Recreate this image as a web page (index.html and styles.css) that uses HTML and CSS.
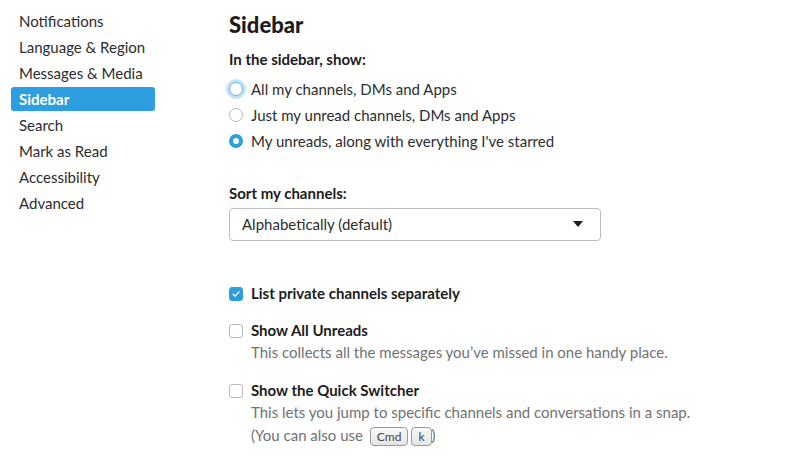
FILE: index.html
```html
<!DOCTYPE html>
<html lang="en">
<head>
  <meta charset="UTF-8" />
  <title>Preferences - Sidebar</title>
  <link rel="stylesheet" href="styles.css">
</head>
<body>
  <div class="nav">
    <a href="#">Notifications</a>
    <a href="#">Language &amp; Region</a>
    <a href="#">Messages &amp; Media</a>
    <a href="#" class="active">Sidebar</a>
    <a href="#">Search</a>
    <a href="#">Mark as Read</a>
    <a href="#">Accessibility</a>
    <a href="#">Advanced</a>
  </div>

  <div class="main">
    <h1>Sidebar</h1>

    <div class="label">In the sidebar, show:</div>
    <div class="radios">
      <label class="option"><span class="radio focus"></span>All my channels, DMs and Apps</label>
      <label class="option"><span class="radio"></span>Just my unread channels, DMs and Apps</label>
      <label class="option"><span class="radio checked"></span>My unreads, along with everything I've starred</label>
    </div>

    <div class="label sort">Sort my channels:</div>
    <div class="select">
      <span>Alphabetically (default)</span>
      <span class="caret"></span>
    </div>

    <div class="check first">
      <span class="box checked">
        <svg viewBox="0 0 12 12" width="10" height="10"><path d="M2.5 6.3 L5 8.6 L9.6 3.4" fill="none" stroke="#fff" stroke-width="1.6" stroke-linecap="round" stroke-linejoin="round"/></svg>
      </span>
      <div>
        <div class="title">List private channels separately</div>
      </div>
    </div>

    <div class="check">
      <span class="box"></span>
      <div>
        <div class="title">Show All Unreads</div>
        <div class="desc">This collects all the messages you’ve missed in one handy place.</div>
      </div>
    </div>

    <div class="check">
      <span class="box"></span>
      <div>
        <div class="title">Show the Quick Switcher</div>
        <div class="desc">This lets you jump to specific channels and conversations in a snap.<br>(You can also use <kbd>Cmd</kbd><kbd>k</kbd>)</div>
      </div>
    </div>
  </div>
</body>
</html>
```

FILE: styles.css
```css
* {
  box-sizing: border-box;
  margin: 0;
  padding: 0;
}

body {
  font-family: Lato, "Open Sans", sans-serif;
  font-size: 15px;
  color: #2c2d30;
  background: #fff;
  display: flex;
  min-height: 100vh;
}

/* Left nav */
.nav {
  width: 229px;
  padding: 9px 0 0 11px;
}

.nav a {
  display: block;
  width: 144px;
  height: 24px;
  line-height: 24px;
  margin-bottom: 2px;
  padding-left: 8px;
  color: #2c2d30;
  text-decoration: none;
  border-radius: 3px;
}

.nav a.active {
  background: #2d9ee0;
  color: #fff;
  font-weight: 700;
}

/* Main */
.main {
  flex: 1;
}

.main h1 {
  margin-top: 10px;
  font-size: 22px;
  line-height: 30px;
  font-weight: 900;
  color: #1d1c1d;
}

.label {
  margin-top: 8px;
  line-height: 22px;
  font-weight: 700;
  color: #1d1c1d;
}

.label.sort {
  margin-top: 28px;
}

.radios {
  margin-top: 6px;
}

.option {
  display: flex;
  align-items: center;
  height: 26px;
}

.radio {
  width: 14px;
  height: 14px;
  margin-right: 8px;
  border: 1px solid #b8b8b8;
  border-radius: 50%;
  background: #fff;
}

.radio.focus {
  border-color: #6fb1e8;
  box-shadow: 0 0 1px 3px rgba(45, 158, 224, 0.3);
}

.radio.checked {
  border: 4px solid #2d9ee0;
}

.select {
  display: flex;
  align-items: center;
  justify-content: space-between;
  width: 372px;
  height: 33px;
  margin-top: 4px;
  padding: 0 17px 1px 12px;
  border: 1px solid #bdbdbd;
  border-radius: 4px;
  color: #2c2d30;
}

.caret {
  width: 0;
  height: 0;
  border-left: 5px solid transparent;
  border-right: 5px solid transparent;
  border-top: 6px solid #1d1c1d;
}

/* Checkboxes */
.check {
  display: flex;
  margin-top: 15px;
}

.check.first {
  margin-top: 41px;
}

.box {
  flex: none;
  display: flex;
  align-items: center;
  justify-content: center;
  width: 14px;
  height: 14px;
  margin: 5px 8px 0 0;
  border: 1px solid #b8b8b8;
  border-radius: 3px;
  background: #fff;
}

.box.checked {
  background: #2d9ee0;
  border-color: #2d9ee0;
}

.title {
  line-height: 22px;
  font-weight: 700;
  color: #1d1c1d;
}

.desc {
  line-height: 23px;
  color: #717274;
}

kbd {
  display: inline-block;
  height: 19px;
  line-height: 17px;
  padding: 0 6px;
  margin-left: 3px;
  font-family: Lato, sans-serif;
  font-size: 12px;
  color: #444;
  background: linear-gradient(#fafafa, #e4e4e4);
  border: 1px solid #9a9a9a;
  border-radius: 4px;
}
```
